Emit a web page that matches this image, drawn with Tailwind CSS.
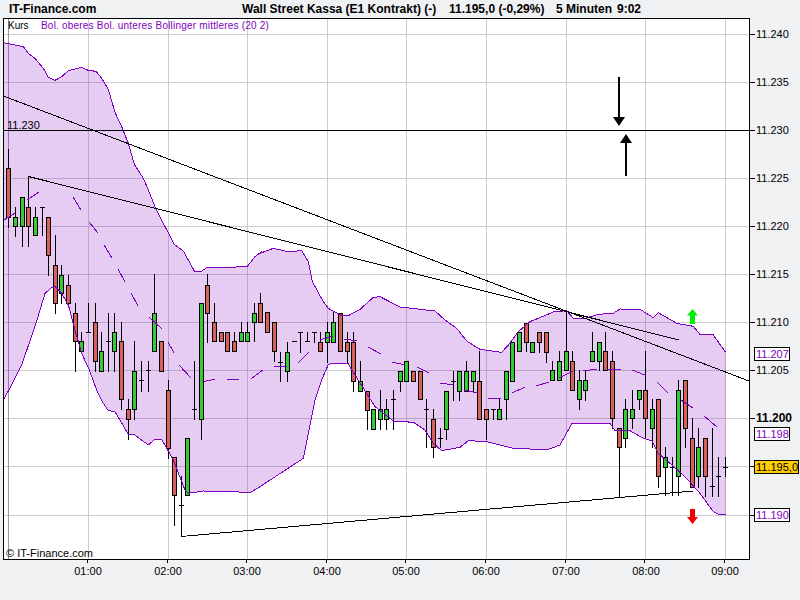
<!DOCTYPE html>
<html lang="de">
<head>
    <meta charset="UTF-8">
    <title>Wall Street Kassa</title>
    <script src="https://cdn.jsdelivr.net/npm/@tailwindcss/browser@4"></script>
</head>
<body class="bg-[#f0f1f3] font-['Liberation_Sans',Arial,sans-serif] overflow-hidden">
    <div class="w-[800px] h-[600px] flex flex-col">
        <!-- header -->
        <div class="h-[18px] shrink-0 flex items-center text-black font-bold text-xs">
            <span class="w-[242px] pl-[9px]">IT-Finance.com</span>
            <span class="w-[207px]">Wall Street Kassa (E1 Kontrakt) (-)</span>
            <span class="w-[107px]">11.195,0 (-0,29%)</span>
            <span class="w-[61px]">5 Minuten</span>
            <span>9:02</span>
        </div>

        <!-- chart, free canvas in page coordinates -->
        <svg class="block w-[800px] h-[582px]" viewBox="0 18 800 582" shape-rendering="crispEdges">
            <rect x="3.5" y="18.5" width="746" height="541" fill="#fff"/>
            <path id="grid" stroke="#ccc" fill="none"/>
            <path d="M8.5 19V559" stroke="#999"/>
            <polygon id="band" fill="#8000c0" fill-opacity="0.2" stroke="none"/>
            <path id="wicks" stroke="#000" fill="none"/>
            <path id="red" stroke="#000" fill="#d9605a"/>
            <path id="green" stroke="#000" fill="#33cc33"/>
            <polyline id="upper" fill="none" stroke="#8000c0"/>
            <polyline id="lower" fill="none" stroke="#8000c0"/>
            <path id="mid" fill="none" stroke="#8000c0"/>

            <!-- trend lines -->
            <g stroke="#000" fill="none">
                <path d="M3.5 96L749 381"/>
                <path d="M28.5 176.5L679 340"/>
                <path d="M181 536.5L693 491"/>
                <path d="M3 130.5H749"/>
            </g>

            <!-- arrows -->
            <g shape-rendering="auto">
                <path d="M618 77h2v41h-2zM613 117h12l-6 9z" fill="#000"/>
                <path d="M625 176h2v-34h-2zM620 143h12l-6-9z" fill="#000"/>
                <path d="M692.5 309l5.5 6.5h-3v8.5h-5v-8.5h-3z" fill="#00ee00"/>
                <path d="M690 509h5v8h3l-5.5 7-5.5-7h3z" fill="#ee0000"/>
            </g>

            <!-- frame and ticks -->
            <rect x="3.5" y="18.5" width="746" height="541" fill="none" stroke="#000"/>
            <path id="ticks" stroke="#000"/>

            <!-- texts on the plot -->
            <g class="text-[10px]">
                <text x="8" y="29" fill="#000">Kurs</text>
                <text x="41" y="29" fill="#8000c0" letter-spacing="0.2">Bol. oberes Bol. unteres Bollinger mittleres (20 2)</text>
            </g>
            <g class="text-[11px]" fill="#000">
                <text x="7" y="129">11.230</text>
                <text x="6" y="557">© IT-Finance.com</text>

                <text x="756" y="38">11.240</text>
                <text x="756" y="86">11.235</text>
                <text x="756" y="134">11.230</text>
                <text x="756" y="182">11.225</text>
                <text x="756" y="230">11.220</text>
                <text x="756" y="278">11.215</text>
                <text x="756" y="326">11.210</text>
                <text x="756" y="374">11.205</text>
                <text x="756" y="422" class="font-bold text-xs">11.200</text>

                <g text-anchor="middle">
                    <text x="88" y="575">01:00</text>
                    <text x="168" y="575">02:00</text>
                    <text x="247" y="575">03:00</text>
                    <text x="327" y="575">04:00</text>
                    <text x="406" y="575">05:00</text>
                    <text x="486" y="575">06:00</text>
                    <text x="566" y="575">07:00</text>
                    <text x="646" y="575">08:00</text>
                    <text x="725" y="575">09:00</text>
                </g>

                <!-- value boxes on the price scale -->
                <g fill="#fff" stroke="#000">
                    <rect x="754.5" y="347.5" width="35" height="13"/>
                    <rect x="754.5" y="427.5" width="35" height="13"/>
                    <rect x="754.5" y="508.5" width="35" height="13"/>
                    <rect x="754.5" y="460.5" width="44" height="13" fill="#ffcc00"/>
                </g>
                <g fill="#8000c0">
                    <text x="756" y="358">11.207</text>
                    <text x="756" y="438">11.198</text>
                    <text x="756" y="519">11.190</text>
                </g>
                <text x="756" y="471">11.195,0</text>
            </g>
        </svg>
    </div>

    <script>
        // candles in pixels: x, kind (r/g body, d doji), top, bottom, high, low
        // for a doji top is the dash and bottom is unused
        const candles = [
            [8,'r',168,217,149,227],[15,'g',217,226,207,236],[22,'g',197,226,197,246],[28,'r',207,226,177,246],
            [35,'g',217,235,207,235],[42,'d',207,0,207,235],[48,'r',217,255,217,275],[55,'r',265,303,235,313],
            [61,'g',275,293,265,303],[68,'r',285,303,275,303],[75,'r',313,341,303,371],[81,'g',341,351,332,351],
            [88,'d',332,0,303,332],[95,'r',322,361,303,371],[101,'g',351,371,332,371],[108,'d',341,0,313,371],
            [114,'g',332,351,313,371],[121,'r',341,399,322,409],[128,'r',409,419,399,439],[134,'g',371,409,341,419],
            [141,'d',380,0,361,391],[148,'d',370,0,361,391],[154,'g',313,351,274,351],[161,'r',341,371,341,371],
            [168,'r',390,448,380,458],[174,'r',457,495,457,525],[181,'d',505,0,476,536],[187,'g',438,495,438,495],
            [194,'d',409,0,361,419],[201,'g',303,419,303,439],[207,'r',285,313,274,342],[214,'r',322,341,303,341],
            [221,'r',332,341,332,341],[227,'r',332,351,332,351],[234,'r',341,351,332,351],[241,'g',332,341,322,341],
            [247,'g',332,341,322,341],[254,'g',313,322,303,341],[260,'r',303,322,293,322],[267,'r',312,332,312,332],
            [274,'r',322,351,322,361],[280,'d',362,0,352,381],[287,'g',352,371,342,381],[294,'d',341,0,341,341],
            [300,'d',332,0,332,352],[307,'d',341,0,332,341],[314,'d',332,0,332,342],[320,'r',342,351,332,351],
            [327,'g',332,342,322,362],[333,'g',322,342,312,342],[340,'r',313,351,313,351],[347,'r',342,351,332,362],
            [353,'r',342,381,332,391],[360,'g',381,391,361,391],[367,'r',391,410,391,429],[373,'g',409,429,409,429],
            [380,'g',409,419,390,429],[386,'g',409,419,399,429],[393,'d',399,0,390,429],[400,'g',371,381,371,391],
            [406,'g',361,381,361,381],[413,'r',371,381,371,381],[420,'r',371,399,371,399],[426,'d',409,0,399,447],
            [433,'r',419,447,409,457],[440,'d',438,0,428,447],[446,'g',391,429,391,439],[453,'d',381,0,371,400],
            [459,'g',371,391,371,400],[466,'g',371,391,361,391],[473,'g',371,381,371,391],[479,'r',381,419,351,419],
            [486,'r',409,419,409,439],[493,'d',409,0,409,419],[499,'g',409,419,399,419],[506,'g',371,399,371,419],
            [512,'g',342,381,342,381],[519,'g',332,351,332,351],[526,'r',323,342,323,351],[532,'g',342,352,342,352],
            [539,'r',332,342,332,352],[546,'r',332,352,332,362],[552,'g',370,380,361,380],[559,'g',361,380,351,380],
            [566,'g',351,370,310,370],[572,'r',361,390,351,390],[579,'g',380,399,370,409],[585,'g',380,390,370,400],
            [592,'g',351,361,332,361],[599,'g',342,361,342,370],[605,'r',351,370,332,370],[612,'r',361,418,351,428],
            [619,'r',428,447,428,496],[625,'g',409,438,399,447],[632,'g',409,418,390,428],[639,'g',390,399,390,409],
            [645,'r',390,418,351,438],[652,'g',409,428,399,447],[658,'r',399,476,399,487],[665,'g',457,467,447,495],
            [672,'d',467,0,457,495],[678,'g',390,476,380,495],[685,'r',380,428,380,447],[692,'r',438,487,418,487],
            [698,'g',447,476,428,487],[705,'r',438,476,438,496],[712,'d',486,0,428,496],[718,'d',476,0,457,496],
            [725,'d',467,0,457,476]
        ];

        let wicks = '', red = '', green = '';
        for (const [x, kind, top, bottom, high, low] of candles) {
            wicks += `M${x + 0.5} ${high}V${low + 1}`;
            if (kind === 'd') {
                wicks += `M${x - 2} ${top + 0.5}H${x + 3}`;
            } else {
                const body = `M${x - 1.5} ${top + 0.5}H${x + 2.5}V${bottom + 0.5}H${x - 1.5}Z`;
                if (kind === 'r') red += body; else green += body;
            }
        }
        document.getElementById('wicks').setAttribute('d', wicks);
        document.getElementById('red').setAttribute('d', red);
        document.getElementById('green').setAttribute('d', green);

        // bands were read off in 3x crops, so each chunk has its own offset
        const read = (ox, oy, pts) => pts.map(([x, y]) => [ox + x / 3, oy + y / 3]);
        const upper = [
            ...read(0, 0, [[10,128],[70,140],[85,160],[105,175],[130,205],[145,232],[165,241],[185,230],[205,212],[245,202],[265,211],[288,214],[305,235],[325,268],[345,337],[365,380],[385,430],[403,493],[430,535]]),
            ...read(0, 190, [[445,0],[465,50],[490,100],[523,163],[550,183],[583,243],[605,243],[622,232],[655,234],[742,229],[765,200],[785,185]]),
            ...read(260, 230, [[0,70],[40,55],[85,65],[125,62],[145,95],[157,155],[190,215],[205,235],[245,257],[265,257],[300,238],[340,202],[360,200],[420,231],[525,243],[555,270],[590,295],[620,333],[660,358],[725,367],[745,345],[775,305],[810,275]]),
            ...read(530, 290, [[70,66],[110,62],[130,85],[165,85],[205,73],[250,70],[270,57],[330,58],[370,83],[385,68],[440,100],[490,109],[510,133],[550,135],[587,187]])
        ];
        const lower = [
            [3.5, 400],
            ...read(0, 190, [[28,597],[65,525],[108,400],[135,310],[155,293],[165,290],[185,310],[205,345],[225,420],[245,490],[268,540]]),
            ...read(0, 390, [[290,0],[310,40],[325,62],[345,65],[385,133],[405,135],[445,165],[465,148],[485,148],[520,210],[555,300],[565,310],[610,303],[752,307],[780,290]]),
            ...read(260, 230, [[130,685],[155,560],[165,510],[185,450],[205,403],[225,400],[265,402],[285,435],[320,490],[345,530],[400,573],[460,577],[495,600],[520,640],[545,662],[600,652],[625,632],[680,635],[760,655],[810,657]]),
            ...read(530, 290, [[50,480],[90,465],[125,402],[240,400],[255,422],[300,422],[340,445],[365,452],[385,490],[420,520],[470,565],[510,610],[550,665],[565,673],[587,673]])
        ];
        const str = pts => pts.map(p => p.join(',')).join(' ');
        document.getElementById('upper').setAttribute('points', str(upper));
        document.getElementById('lower').setAttribute('points', str(lower));
        document.getElementById('band').setAttribute('points', str([...upper, ...lower.slice().reverse()]));

        const mid = [[4,220,15,213],[27,200,39,192],[73,197,81,210],[89,222,98,233],[104,245,112,258],[118,269,125,282],
            [131,293,138,306],[149,317,162,329],[168,342,174,353],[179,365,191,378],[202,382,215,379],[227,380,239,379],
            [251,379,263,370],[274,366,287,367],[298,363,309,352],[320,340,333,336],[344,339,357,341],[368,347,381,354],
            [392,362,405,365],[417,367,429,373],[440,383,453,385],[464,390,477,393],[488,398,501,398],[512,393,525,387],
            [536,386,549,382],[559,378,573,371],[583,371,597,369],[608,369,621,370],[632,370,645,375],[657,382,668,393],
            [681,400,693,408],[704,416,717,427]];
        document.getElementById('mid').setAttribute('d', mid.map(m => `M${m[0]} ${m[1]}L${m[2]} ${m[3]}`).join(''));

        // grid and axis ticks
        const gridY = [34,82,130,178,226,274,322,370,418,466,515];
        const gridX = [88,168,247,327,406,486,566,645,725];
        let grid = '', ticks = '';
        for (const y of gridY) {
            grid += `M4 ${y + 0.5}H749`;
            ticks += `M749 ${y + 0.5}H755`;
        }
        for (const x of gridX) {
            grid += `M${x + 0.5} 19V559`;
            ticks += `M${x - 0.5} 559V563`;
        }
        document.getElementById('grid').setAttribute('d', grid);
        document.getElementById('ticks').setAttribute('d', ticks);
    </script>
</body>
</html>
